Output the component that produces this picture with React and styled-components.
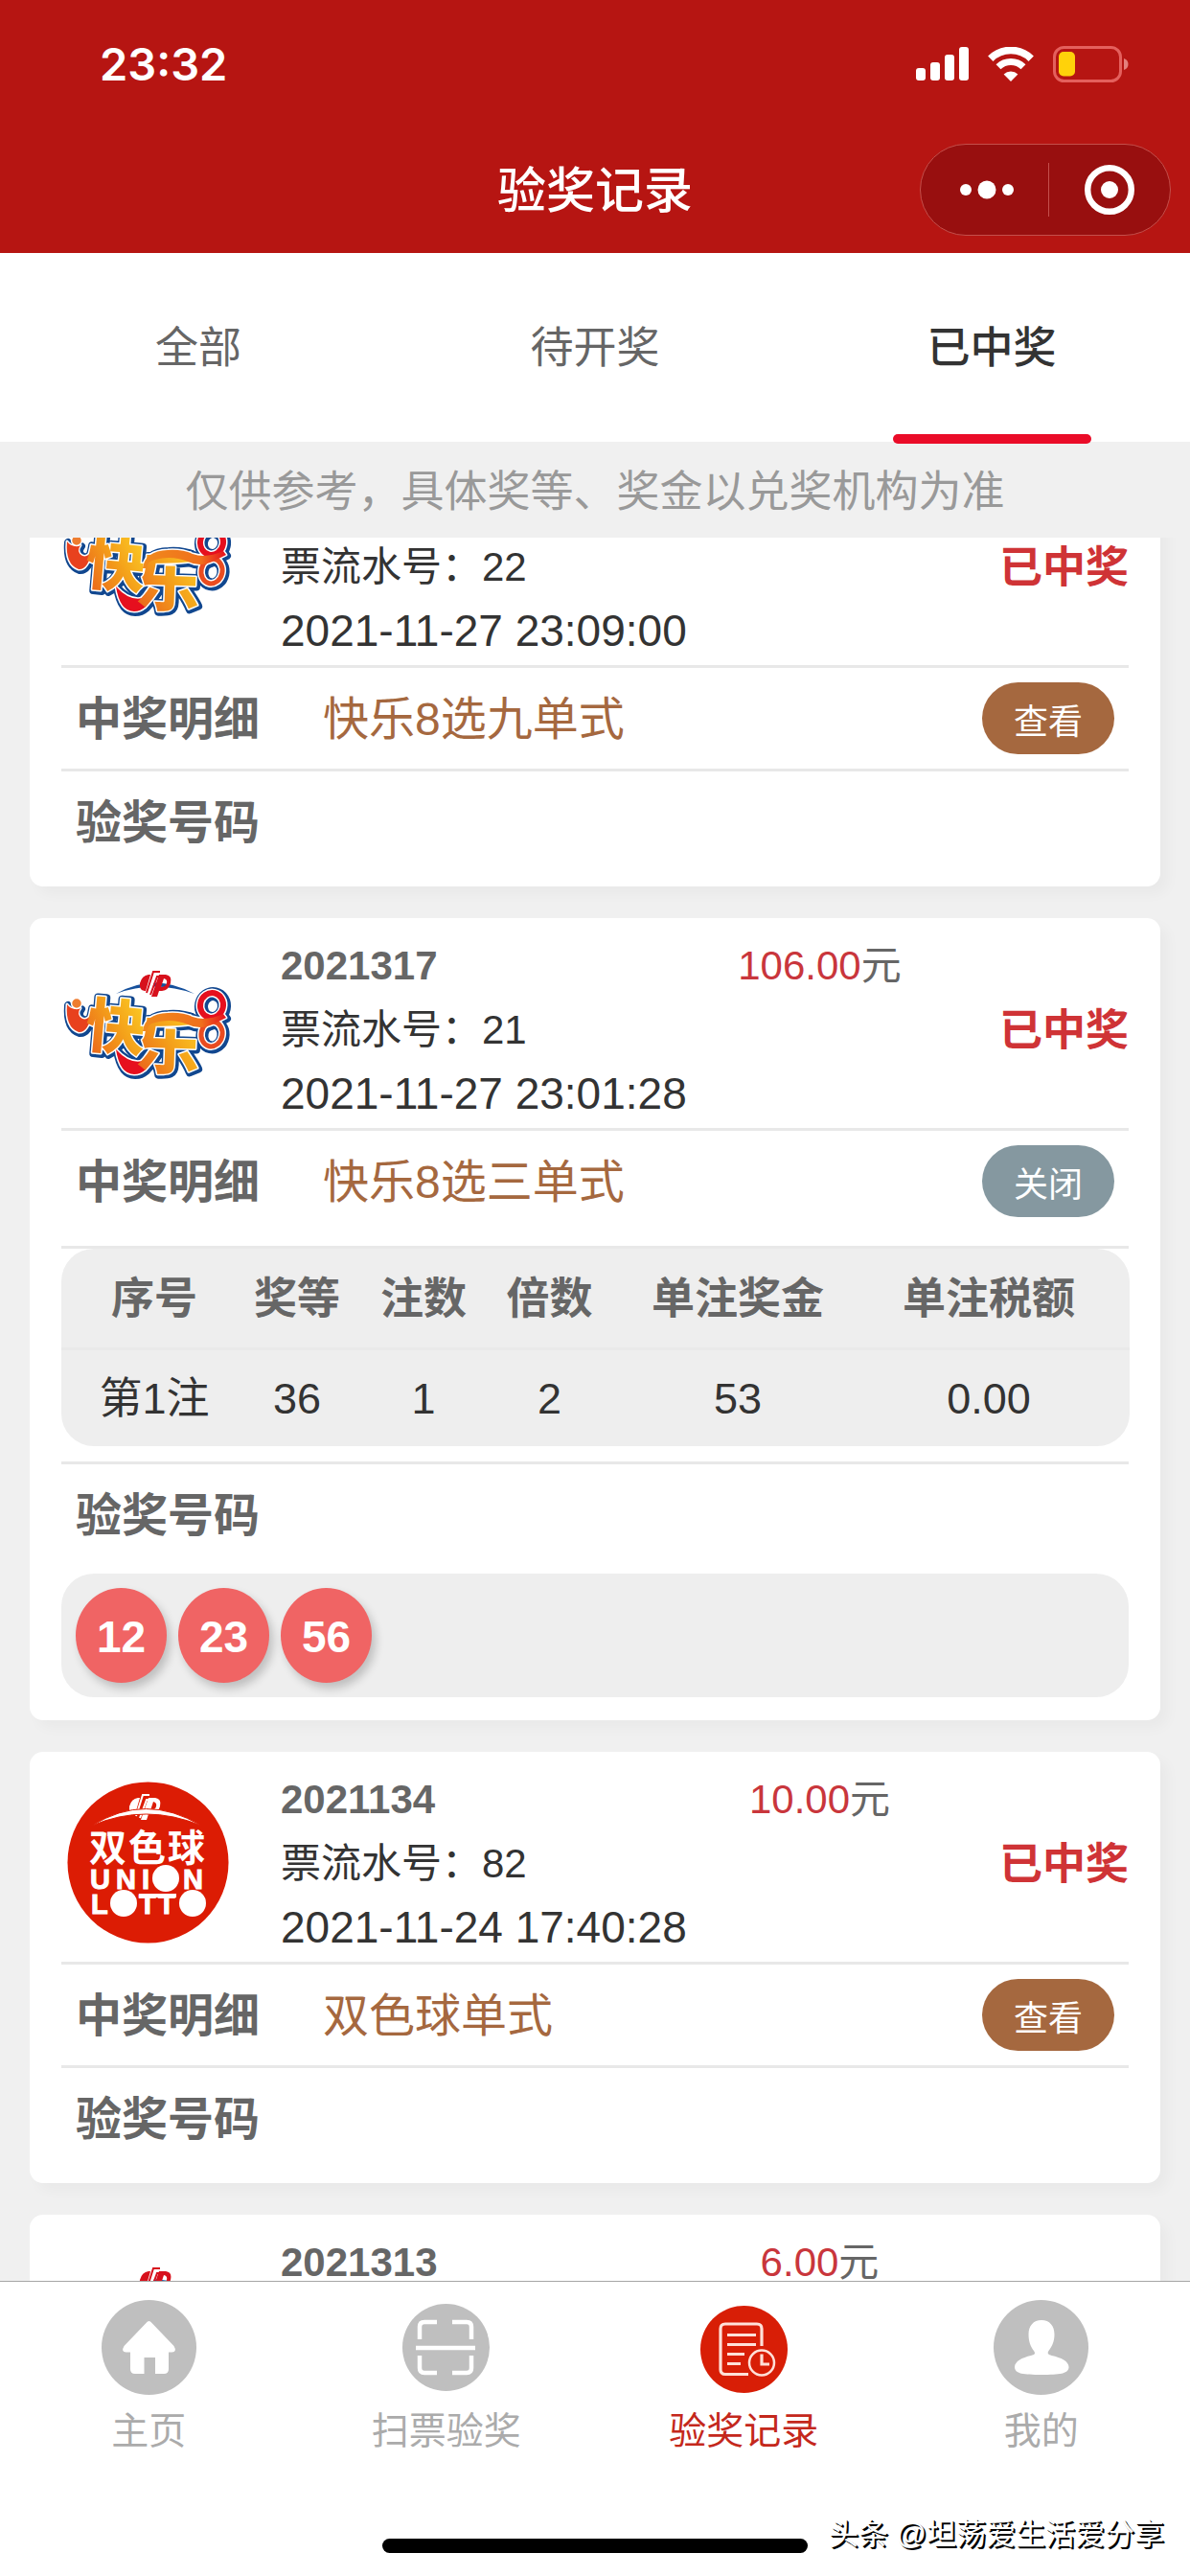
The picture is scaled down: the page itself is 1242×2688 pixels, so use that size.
import React, { useLayoutEffect, useRef } from "react";
import styled, { createGlobalStyle } from "styled-components";

const GlobalStyle = createGlobalStyle`
  *, *::before, *::after { box-sizing: border-box; }
  body {
    margin: 0;
    background: #f0f0f0;
    color: #333;
    font-family: "Liberation Sans", "Noto Sans CJK SC", sans-serif;
  }
  button { font-family: inherit; border: 0; padding: 0; background: none; cursor: pointer; }
  svg { display: block; flex: none; }
`;

const Page = styled.div`
  position: relative;
  display: flex;
  flex-direction: column;
  height: 100vh;
  overflow: hidden;
`;

const Header = styled.header`
  flex: none;
  background: #b61512;
  color: #fff;
`;

const StatusBar = styled.div`
  display: flex;
  align-items: center;
  justify-content: space-between;
  height: 134px;
  padding: 0 64px 0 104px;
`;

const Clock = styled.time`
  font: 600 47px/56px Inter, sans-serif;
`;

const StatusIcons = styled.div`
  display: flex;
  align-items: center;
  gap: 20px;
`;

const NavBar = styled.div`
  display: grid;
  grid-template-columns: 1fr auto 1fr;
  align-items: center;
  height: 130px;
  padding: 0 20px 2px;
`;

const Title = styled.h1`
  grid-column: 2;
  margin: 0;
  padding-top: 4px;
  font-size: 51px;
  line-height: 64px;
  font-weight: 500;
`;

const Capsule = styled.div`
  justify-self: end;
  display: flex;
  align-items: center;
  width: 262px;
  height: 96px;
  border: 1px solid #c44f4b;
  border-radius: 48px;
  background: #980f0f;
`;

const CapsuleButton = styled.button`
  flex: 1;
  display: flex;
  align-items: center;
  justify-content: center;
  height: 56px;

  &:first-child { padding-left: 6px; }
  & + & { border-left: 1px solid #c44f4b; }
`;

const Tabs = styled.nav`
  flex: none;
  display: flex;
  height: 197px;
  background: #fff;
`;

const Tab = styled.button`
  position: relative;
  flex: 1;
  padding-top: 2px;
  font-size: 45px;
  line-height: 60px;
  font-weight: ${(p) => (p.$active ? 500 : 400)};
  color: ${(p) => (p.$active ? "#333" : "#666")};

  &::after {
    content: "";
    display: ${(p) => (p.$active ? "block" : "none")};
    position: absolute;
    left: 25%;
    right: 25%;
    bottom: -2px;
    height: 10px;
    border-radius: 5px;
    background: #ea0c28;
  }
`;

const Notice = styled.p`
  flex: none;
  margin: 0;
  padding: 23px 0 17px;
  font-size: 45px;
  line-height: 60px;
  text-align: center;
  color: #999;
`;

const List = styled.main`
  flex: 1;
  min-height: 0;
  overflow-y: auto;
  scrollbar-width: none;
  padding: 0 31px;
`;

const Card = styled.article`
  margin-bottom: 33px;
  padding: 0 33px 15px;
  border-radius: 14px;
  background: #fff;
  box-shadow: 8px 8px 14px rgba(0, 0, 0, 0.03);
`;

const Summary = styled.div`
  display: flex;
  align-items: center;
  height: 219px;
  padding: 16px 0 2px;
`;

const Info = styled.div`
  flex: 1;
  margin-left: 48px;
  display: grid;
  grid-template-columns: 1fr 1fr;
  grid-auto-rows: 67px;
  line-height: 67px;
  white-space: nowrap;
`;

const Period = styled.strong`
  font-size: 42px;
  color: #666;
`;

const Amount = styled.span`
  font-size: 42px;
  text-align: center;
  color: #666;
`;

const Money = styled.span`
  color: #c9363c;
`;

const Serial = styled.span`
  grid-column: 1 / -1;
  font-size: 42px;
`;

const Time = styled.time`
  grid-column: 1 / -1;
  font-size: 46px;
`;

const Status = styled.strong`
  width: 135px;
  padding-top: 2px;
  font-size: 45px;
  line-height: 60px;
  color: #cf3336;
`;

const Row = styled.div`
  display: flex;
  align-items: center;
  min-height: 108px;
  padding: 0 15px;
  border-top: 3px solid #e8e8e8;
`;

const RowTitle = styled.h2`
  margin: 0;
  padding-top: 2px;
  font-size: 48px;
  line-height: 64px;
  font-weight: 700;
  color: #666;
`;

const Game = styled.span`
  margin-left: 66px;
  padding-top: 2px;
  font-size: 48px;
  line-height: 64px;
  color: #a5683f;
`;

const Toggle = styled.button`
  margin-left: auto;
  width: 138px;
  height: 75px;
  border-radius: 38px;
  font-size: 36px;
  color: #fff;
  background: ${(p) => (p.$open ? "#8598a0" : "#a5683f")};
`;

const TableWrap = styled.div`
  margin: 15px 0 16px;
  border-top: 3px solid #e8e8e8;
`;

const Table = styled.table`
  width: 100%;
  table-layout: fixed;
  border-collapse: separate;
  border-spacing: 0;
  border-radius: 34px;
  overflow: hidden;
  background: #eee;
  font-size: 45px;
  line-height: 60px;
  text-align: center;

  th, td { padding: 2px 0 0; white-space: nowrap; }
  th { height: 106px; color: #666; font-weight: 700; border-bottom: 3px solid #e9e9e9; }
  td { height: 100px; }
  tr > :first-child { padding-left: 15px; }
  tr > :last-child { padding-right: 15px; }
`;

const Column = styled.col`
  width: ${(p) => p.$width}px;
`;

const Balls = styled.ul`
  display: flex;
  gap: 12px;
  margin: 9px 0;
  padding: 15px;
  border-radius: 34px;
  background: #eee;
  list-style: none;
`;

const Ball = styled.li`
  width: 95px;
  height: 99px;
  border-radius: 50%;
  background: #f06464;
  box-shadow: 4px 6px 10px rgba(0, 0, 0, 0.2);
  color: #fff;
  font-size: 46px;
  font-weight: 700;
  line-height: 102px;
  text-align: center;
`;

const Footer = styled.footer`
  flex: none;
  border-top: 1px solid #a6a6a6;
  background: #fff;
`;

const TabBar = styled.nav`
  display: flex;
  padding-top: 19px;
`;

const TabLink = styled.a`
  flex: 1;
  display: flex;
  flex-direction: column;
  align-items: center;
  gap: 10px;
  font-size: 39px;
  line-height: 56px;
  text-decoration: none;
  color: ${(p) => (p.$active ? "#c4281c" : "#ababab")};
`;

const HomeIndicator = styled.div`
  width: 444px;
  height: 15px;
  margin: 84px auto 24px;
  border-radius: 8px;
  background: #000;
`;

const Watermark = styled.span`
  position: absolute;
  right: 27px;
  bottom: 23px;
  font-size: 31px;
  line-height: 40px;
  color: #fff;
  text-shadow: 1px 1px 0 #000, 2px 2px 0 #000;
`;

const SignalIcon = () => (
  <svg width="55" height="36" viewBox="0 0 55 36" fill="#fff" aria-hidden="true">
    <rect x="0" y="22" width="10" height="13" rx="3" />
    <rect x="15" y="16" width="10" height="19" rx="3" />
    <rect x="30" y="8" width="10" height="27" rx="3" />
    <rect x="45" y="0" width="10" height="35" rx="3" />
  </svg>
);

const WifiIcon = () => (
  <svg width="48" height="36" viewBox="0 0 48 36" fill="none" stroke="#fff" aria-hidden="true">
    <path d="M2.8 12.2a30 30 0 0 1 42.4 0" strokeWidth="7.6" />
    <path d="M11 20.8a18.5 18.5 0 0 1 26 0" strokeWidth="7" />
    <path d="M24 36l-7.4-7.6a10.6 10.6 0 0 1 14.8 0z" fill="#fff" stroke="none" />
  </svg>
);

const BatteryIcon = () => (
  <svg width="79" height="38" viewBox="0 0 79 38" aria-hidden="true">
    <rect x="1.5" y="1.5" width="69" height="35" rx="10" fill="none" stroke="#e4605d" strokeWidth="3" />
    <rect x="6" y="6" width="17" height="25.500" rx="5" fill="#ffd20a" />
    <path d="M74 13c3 1 4.500 3 4.500 6s-1.500 5-4.500 6z" fill="#e4807d" />
  </svg>
);

const MoreIcon = () => (
  <svg width="56" height="20" viewBox="0 0 56 20" fill="#fff" aria-hidden="true">
    <circle cx="6" cy="10" r="6" />
    <circle cx="28" cy="10" r="9.500" />
    <circle cx="50" cy="10" r="6" />
  </svg>
);

const TargetIcon = () => (
  <svg width="52" height="52" viewBox="0 0 52 52" fill="none" aria-hidden="true">
    <circle cx="26" cy="26" r="22.800" stroke="#fff" strokeWidth="6.400" />
    <circle cx="26" cy="26" r="9" fill="#fff" />
  </svg>
);

const HomeIcon = () => (
  <svg width="99" height="99" viewBox="0 0 99 99" aria-hidden="true">
    <circle cx="49.500" cy="49.500" r="49.500" fill="#bfbfbf" />
    <path
      fill="#fff"
      d="M46.500 24q3-4 6 0L75.500 48q3.500 6-2 6.500H70V72q0 5-5 5H56V60H44.500v17H35q-5 0-5-5V54.500h-4.500q-5.500-.5-2-6.500z"
    />
  </svg>
);

const ScanIcon = () => (
  <svg width="99" height="99" viewBox="0 0 99 99" aria-hidden="true">
    <circle cx="49.500" cy="49.500" r="45.500" fill="#bfbfbf" />
    <path
      fill="none"
      stroke="#fff"
      strokeWidth="4.500"
      d="M40 23H27q-5 0-5 5v13M56 23h15q5 0 5 5v13M40 76H27q-5 0-5-5V58M56 76h15q5 0 5-5V58M18 50h62"
    />
  </svg>
);

const RecordIcon = () => (
  <svg width="99" height="99" viewBox="0 0 99 99" aria-hidden="true">
    <circle cx="49.500" cy="51.500" r="45.500" fill="#d81e06" />
    <g fill="none" stroke="#ffe0d8" strokeWidth="3.200">
      <path d="M54 77.500H30q-5 0-5-5V30q0-5 5-5h33q5 0 5 5v18M32 36.500h30M32 46.500h30M32 56.500h18M32 66.500h14" />
      <circle cx="68" cy="65.500" r="13" strokeWidth="2.500" />
      <path d="M68 56.500v10.500h8" />
    </g>
  </svg>
);

const ProfileIcon = () => (
  <svg width="99" height="99" viewBox="0 0 99 99" aria-hidden="true">
    <circle cx="49.500" cy="49.500" r="49.500" fill="#bfbfbf" />
    <path
      fill="#fff"
      d="M50 21c8.500 0 13.500 6 13.500 15 0 8-3 13-6 17-2 3 0 4 3 5 10 2 18 6 18 12 0 7-10 8-28.500 8S22 77 22 70c0-6 8-10 17-12 4-1 5-2 3-5-3-4-5.500-9-5.500-17 0-9 5-15 13.500-15z"
    />
  </svg>
);

const Emblem = ({ x, y, color, gap }) => (
  <g transform={`translate(${x} ${y})`}>
    <path
      fill={color}
      fillRule="evenodd"
      d="M9 5h5L9 22H5Q-1 21 0 14 2 6 9 5zM20 5h7q7 1 5 9-2 7-9 8h-3l-2 6h-6zM25 9l-3 9q5 0 6-4t-3-5z"
    />
    <path fill="none" stroke={gap} strokeWidth="6" d="M8 26l7-24h7" />
    <path fill="none" stroke={color} strokeWidth="2" d="M7 24l7-22h7M11 26l7-19h5" />
  </g>
);

const HappyEightLogo = () => (
  <svg width="181" height="181" viewBox="0 0 181 181" role="img" aria-label="快乐8">
    <defs>
      <linearGradient id="gold" x1="0" y1="1" x2="1" y2="0">
        <stop offset="0" stopColor="#e8561c" />
        <stop offset="0.5" stopColor="#f4a01a" />
        <stop offset="1" stopColor="#ffe02a" />
      </linearGradient>
      <linearGradient id="ribbon" x1="0" y1="0" x2="1" y2="0">
        <stop offset="0" stopColor="#f08a1c" />
        <stop offset="0.7" stopColor="#f0701c" />
        <stop offset="1" stopColor="#e60f1e" />
      </linearGradient>
    </defs>
    <path d="M57 53Q97 30 139 53Q97 38 57 53z" fill="#15509c" />
    <Emblem x={82} y={28} color="#d7101c" gap="#fff" />
    {[
      { color: "#11478f", extra: 8, shift: 1 },
      { color: "#fff", extra: 3, shift: 0 },
      { color: null, extra: 0, shift: 0 },
    ].map(({ color, extra, shift }) => (
      <g
        key={extra}
        transform={`translate(${shift} ${shift})`}
        fill="none"
        stroke={color || "none"}
        strokeLinejoin="round"
        strokeLinecap="round"
      >
        <path d="M6 64q-2 24 12 29 10 1 14-20-4 8-10 6-7-4-2-11-9 3-14-4z" fill={color || "#e8411e"} strokeWidth={extra} />
        <path d="M57 111q20 22 39 6-6 20-20 20-15 0-19-26z" fill={color || "#e60f1e"} strokeWidth={extra} />
        <ellipse
          cx="157"
          cy="65"
          rx="12"
          ry="13"
          transform="rotate(12 157 65)"
          stroke={color || "#e60f1e"}
          strokeWidth={6 + extra}
        />
        <ellipse
          cx="157"
          cy="95"
          rx="11"
          ry="13"
          transform="rotate(12 157 95)"
          stroke={color || "#ea4c20"}
          strokeWidth={5 + extra}
        />
        <g
          fill={color || "url(#gold)"}
          strokeWidth={extra}
          fontFamily="Noto Sans CJK SC"
          fontWeight="900"
        >
          <text x="26" y="110" fontSize="62" transform="rotate(5 54 85) skewX(0)">快</text>
          <text x="79" y="131" fontSize="66" transform="rotate(2 110 105)">乐</text>
        </g>
        <path
          d="M85 92q2-18 26-19 15-1 26 4 14 5 32-3l3 4-10 5q-16 9-30 2-17-7-34-2-8 1-9 9z"
          fill={color || "url(#ribbon)"}
          strokeWidth={extra}
        />
      </g>
    ))}
    <circle cx="16" cy="63" r="5.500" fill="#ee7d30" stroke="#fff" strokeWidth="1.500" />
  </svg>
);

const UnionLottoLogo = () => (
  <svg width="181" height="181" viewBox="0 0 181 181" role="img" aria-label="双色球 Union Lotto">
    <circle cx="90.500" cy="89.500" r="84" fill="#dc1c04" />
    <Emblem x={71} y={17} color="#fff" gap="#dc1c04" />
    <path d="M32 51Q88 16 146 51Q88 27 32 51z" fill="#fff" stroke="#dc1c04" strokeWidth="1" />
    <g fill="#fff" fontWeight="700">
      <text x="29 70 111" y="88" fontSize="39" fontFamily="Noto Sans CJK SC">双色球</text>
      <g fontSize="29" fontFamily="Liberation Sans" stroke="#fff" strokeWidth="1">
        <text x="30 57 84" y="117">UNI</text>
        <text x="127" y="117">N</text>
        <text x="31" y="143">L</text>
        <text x="81 101" y="143">TT</text>
      </g>
      <path d="M81 122h39v4H81z" />
      <circle cx="109" cy="106" r="14" />
      <circle cx="65" cy="132" r="14" />
      <circle cx="137" cy="132" r="14" />
    </g>
  </svg>
);

const tabs = ["全部", "待开奖", "已中奖"];

const columns = [
  { title: "序号", width: 179 },
  { title: "奖等", width: 134 },
  { title: "注数", width: 130 },
  { title: "倍数", width: 133 },
  { title: "单注奖金", width: 260 },
  { title: "单注税额", width: 279 },
];

const records = [
  { id: 1, Logo: HappyEightLogo, serial: "22", time: "2021-11-27 23:09:00", game: "快乐8选九单式" },
  {
    id: 2,
    Logo: HappyEightLogo,
    period: "2021317",
    amount: "106.00",
    serial: "21",
    time: "2021-11-27 23:01:28",
    game: "快乐8选三单式",
    prizes: [["第1注", "36", "1", "2", "53", "0.00"]],
    numbers: ["12", "23", "56"],
  },
  {
    id: 3,
    Logo: UnionLottoLogo,
    period: "2021134",
    amount: "10.00",
    serial: "82",
    time: "2021-11-24 17:40:28",
    game: "双色球单式",
  },
  { id: 4, Logo: HappyEightLogo, period: "2021313", amount: "6.00" },
];

const links = [
  { label: "主页", Icon: HomeIcon },
  { label: "扫票验奖", Icon: ScanIcon },
  { label: "验奖记录", Icon: RecordIcon, active: true },
  { label: "我的", Icon: ProfileIcon },
];

function Record({ Logo, period, amount, serial, time, game, prizes, numbers }) {
  return (
    <Card>
      <Summary>
        <Logo />
        <Info>
          <Period>{period}</Period>
          <Amount>
            {amount && (
              <>
                <Money>{amount}</Money>元
              </>
            )}
          </Amount>
          <Serial>{serial && `票流水号：${serial}`}</Serial>
          <Time>{time}</Time>
        </Info>
        <Status>{serial && "已中奖"}</Status>
      </Summary>
      {game && (
        <>
          <Row>
            <RowTitle>中奖明细</RowTitle>
            <Game>{game}</Game>
            <Toggle type="button" $open={!!prizes}>
              {prizes ? "关闭" : "查看"}
            </Toggle>
          </Row>
          {prizes && (
            <TableWrap>
              <Table>
                <colgroup>
                  {columns.map((c) => (
                    <Column key={c.title} $width={c.width} />
                  ))}
                </colgroup>
                <thead>
                  <tr>
                    {columns.map((c) => (
                      <th key={c.title} scope="col">{c.title}</th>
                    ))}
                  </tr>
                </thead>
                <tbody>
                  {prizes.map((row) => (
                    <tr key={row[0]}>
                      {row.map((cell, i) => (
                        <td key={columns[i].title}>{cell}</td>
                      ))}
                    </tr>
                  ))}
                </tbody>
              </Table>
            </TableWrap>
          )}
          <Row>
            <RowTitle>验奖号码</RowTitle>
          </Row>
          {numbers && (
            <Balls>
              {numbers.map((n) => (
                <Ball key={n}>{n}</Ball>
              ))}
            </Balls>
          )}
        </>
      )}
    </Card>
  );
}

export default function App() {
  const list = useRef(null);

  // The list opens slightly scrolled, with the first card partly under the notice.
  useLayoutEffect(() => {
    list.current.scrollTop = 86;
  }, []);

  return (
    <Page lang="zh-CN">
      <GlobalStyle />
      <Header>
        <StatusBar>
          <Clock>23:32</Clock>
          <StatusIcons>
            <SignalIcon />
            <WifiIcon />
            <BatteryIcon />
          </StatusIcons>
        </StatusBar>
        <NavBar>
          <Title>验奖记录</Title>
          <Capsule>
            <CapsuleButton type="button" aria-label="更多">
              <MoreIcon />
            </CapsuleButton>
            <CapsuleButton type="button" aria-label="关闭小程序">
              <TargetIcon />
            </CapsuleButton>
          </Capsule>
        </NavBar>
      </Header>
      <Tabs>
        {tabs.map((t) => (
          <Tab key={t} type="button" $active={t === "已中奖"}>
            {t}
          </Tab>
        ))}
      </Tabs>
      <Notice>仅供参考，具体奖等、奖金以兑奖机构为准</Notice>
      <List ref={list}>
        {records.map((r) => (
          <Record key={r.id} {...r} />
        ))}
      </List>
      <Footer>
        <TabBar>
          {links.map(({ label, Icon, active }) => (
            <TabLink key={label} href="#" $active={active}>
              <Icon />
              {label}
            </TabLink>
          ))}
        </TabBar>
        <HomeIndicator />
      </Footer>
      <Watermark>头条 @坦荡爱生活爱分享</Watermark>
    </Page>
  );
}
